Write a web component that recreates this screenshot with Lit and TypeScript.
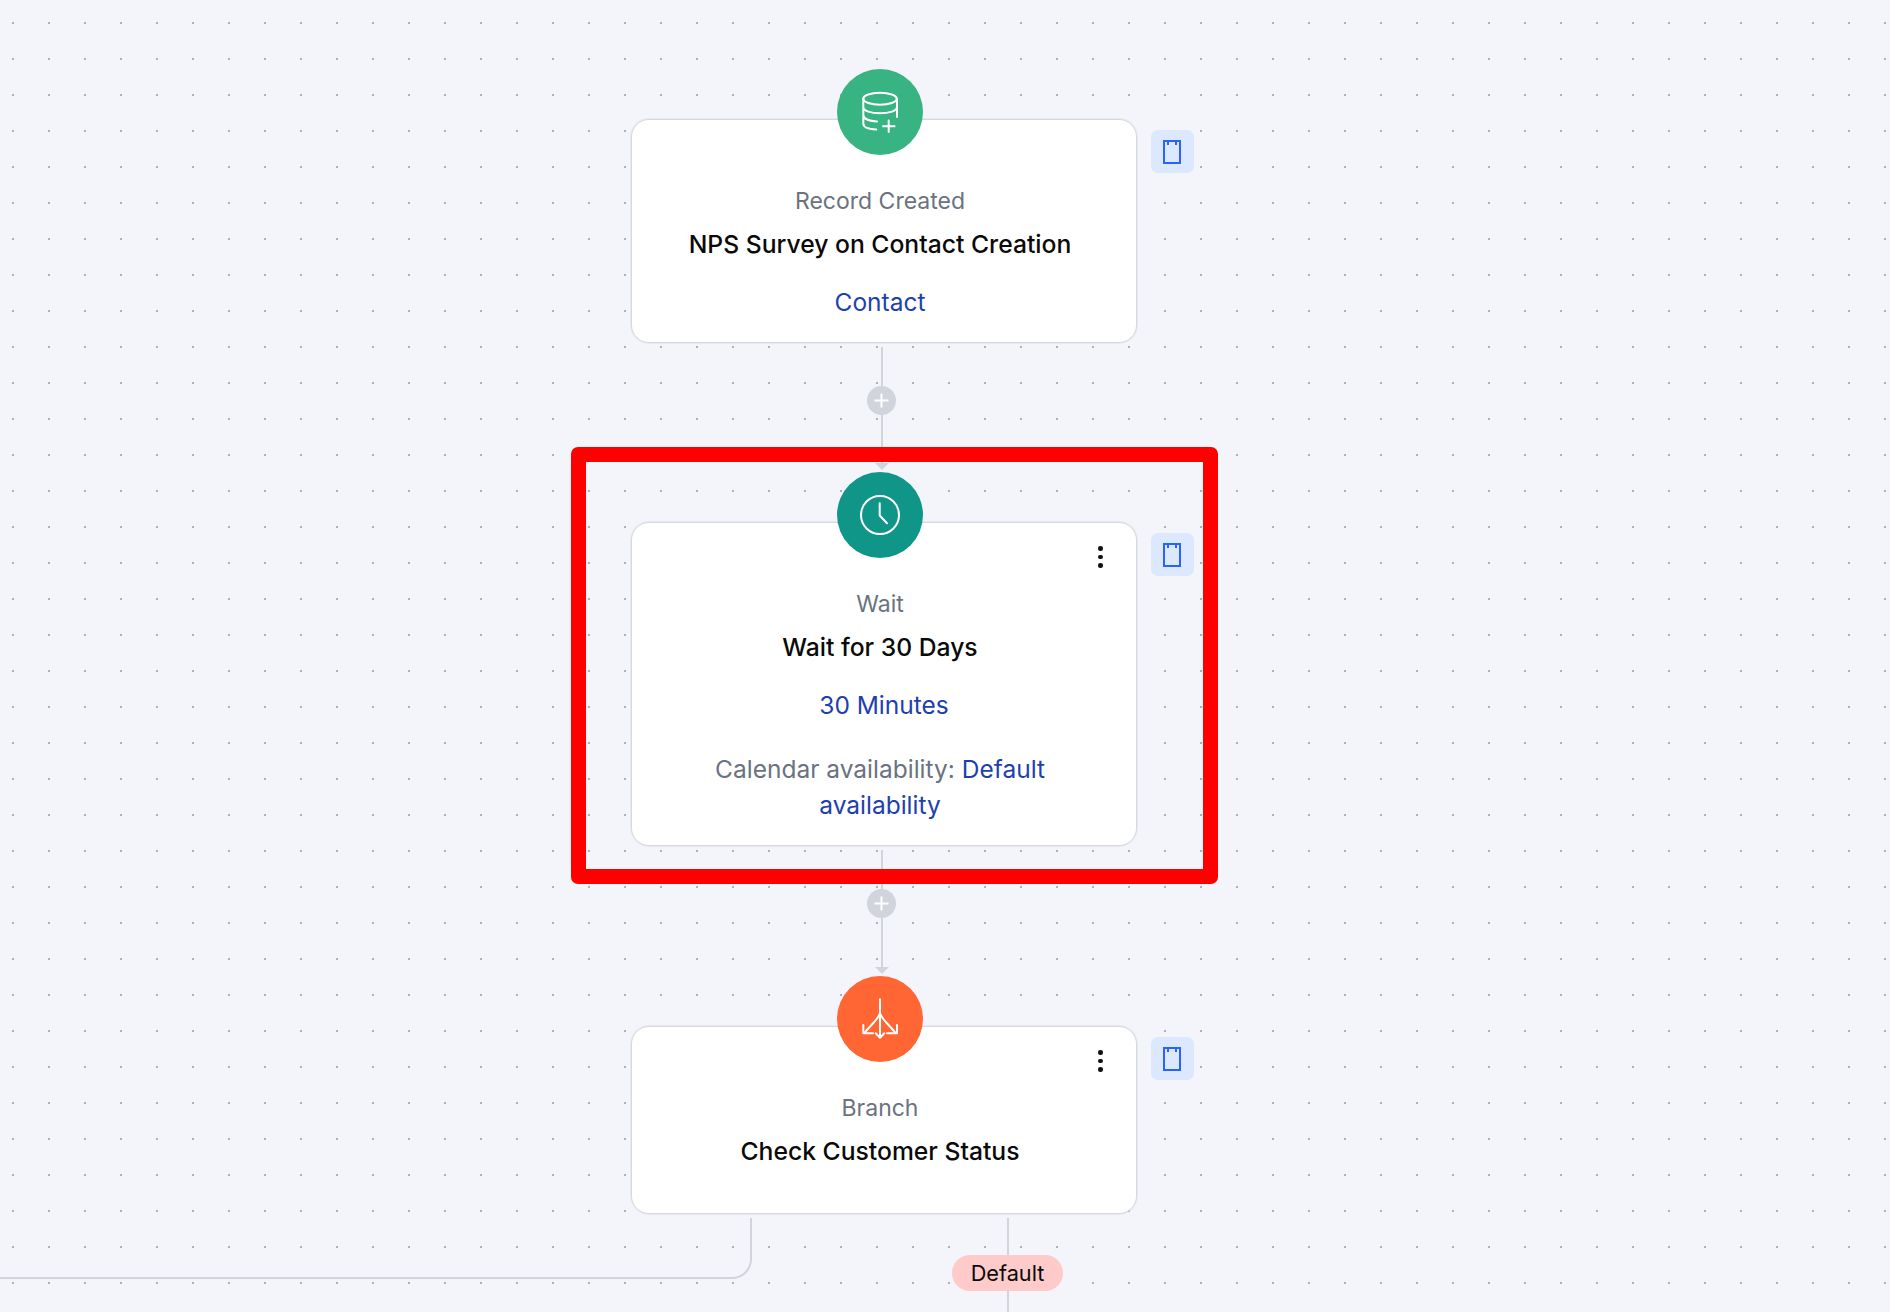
import {LitElement, html, svg, css} from 'lit';
import {customElement} from 'lit/decorators.js';

const databaseIcon = svg`
  <ellipse cx="43" cy="29.7" rx="16.7" ry="6"/>
  <path d="M60 29.7V48M26.3 29.7V54.5c0 3.500 5 5.700 13 6M26.3 38c0 3.800 7.500 6.300 16.700 6.300s17-2.500 17-6.300M26.300 46c0 3.500 5.500 6 13.700 6.400"/>
  <path d="M51.700 51.500v11.500M46 57.300h11.500"/>
`;

const clockIcon = svg`
  <circle cx="43" cy="43" r="19"/>
  <path d="M42.700 31.300V43.500L50 51.300"/>
`;

const branchIcon = svg`
  <path d="M43 23.300V61"/>
  <path d="M38.700 57.300L43 61.700L47.300 57.300"/>
  <path d="M43 37.300C42 42 35 48 27.500 56.800M43 37.300C44 42 51 48 58.500 56.800"/>
  <path d="M26.300 49V57.300H36M60 49V57.300H50"/>
`;

const NODES = [
  {
    color: 'green', icon: databaseIcon, menu: false,
    label: 'Record Created', title: 'NPS Survey on Contact Creation', link: 'Contact',
  },
  {
    color: 'teal', icon: clockIcon, menu: true,
    label: 'Wait', title: 'Wait for 30 Days', link: '30 Minutes', shifted: true, calendar: true,
  },
  {
    color: 'orange', icon: branchIcon, menu: true,
    label: 'Branch', title: 'Check Customer Status',
  },
];

@customElement('app-root')
export class AppRoot extends LitElement {
  static styles = css`
    :host {
      display: block;
      font-family: Inter, "Liberation Sans", sans-serif;
    }
    .stage {
      position: relative;
      width: 1890px;
      height: 1312px;
      overflow: hidden;
      background: #f3f5fa;
    }
    .dots {
      position: absolute;
      inset: 0;
      width: 100%;
      height: 100%;
    }
    .flow {
      position: relative;
      display: flex;
      flex-direction: column;
      padding: 119px 0 0 631px;
    }
    .node {
      display: flex;
      align-items: flex-start;
      gap: 14px;
    }
    .card {
      position: relative;
      box-sizing: border-box;
      width: 506px;
      min-height: 188px;
      padding: 63px 8px 22px 0;
      display: flex;
      flex-direction: column;
      align-items: center;
      background: #fff;
      border: 1px solid #d5d8df;
      box-shadow: 0 0 0 1px rgba(213, 216, 223, 0.35);
      border-radius: 18px;
      font-size: 24.500px;
      line-height: 36px;
      text-align: center;
    }
    .badge {
      position: absolute;
      left: 205px;
      top: -51px;
      width: 86px;
      height: 86px;
      border-radius: 50%;
    }
    .badge svg {
      display: block;
      fill: none;
      stroke: #fff;
      stroke-width: 2;
      stroke-linecap: round;
      stroke-linejoin: round;
    }
    .green { background: #38b382; }
    .teal { background: #0f9688; }
    .orange { background: #ff6633; }
    .menu {
      position: absolute;
      right: 33.500px;
      top: 23px;
      display: flex;
      flex-direction: column;
      gap: 4px;
    }
    .menu span {
      width: 4.500px;
      height: 4.500px;
      border-radius: 50%;
      background: #111;
    }
    .label {
      color: #6b7280;
      font-size: 23px;
    }
    .title {
      margin-top: 7px;
      color: #0a0a0a;
      font-size: 24.700px;
      font-weight: 500;
    }
    .link {
      margin-top: 22px;
      color: #1e40af;
    }
    .shifted {
      margin-left: 8px;
    }
    .calendar {
      margin-top: 28px;
      max-width: 420px;
      color: #6b7280;
    }
    .calendar span {
      color: #1e40af;
    }
    .note {
      box-sizing: border-box;
      width: 43px;
      height: 43px;
      margin-top: 11px;
      padding-right: 1px;
      display: flex;
      align-items: center;
      justify-content: center;
      background: #dbe8fe;
      border-radius: 7px;
    }
    .connector {
      width: 501px;
      height: 180px;
      box-sizing: border-box;
      padding: 4px 0 52px;
      display: flex;
      flex-direction: column;
      align-items: center;
    }
    .node:first-child + .connector {
      height: 179px;
    }
    .line {
      flex: 1;
      width: 2px;
      background: #d1d5db;
    }
    .line.first {
      flex: none;
      height: 39px;
    }
    .plus {
      width: 29px;
      height: 29px;
      flex: none;
      border-radius: 50%;
      background: #d1d5db;
    }
    .arrow {
      width: 0;
      height: 0;
      border-left: 7px solid transparent;
      border-right: 7px solid transparent;
      border-top: 7px solid #d1d5db;
    }
    .highlight {
      position: absolute;
      left: 571px;
      top: 447px;
      box-sizing: border-box;
      width: 647px;
      height: 437px;
      border: 15px solid #ff0000;
      border-radius: 7px;
    }
    .edge-left {
      position: absolute;
      left: 0;
      top: 1218px;
      box-sizing: border-box;
      width: 752px;
      height: 61px;
      border-right: 2px solid #d1d5db;
      border-bottom: 2px solid #d1d5db;
      border-bottom-right-radius: 20px;
    }
    .edge-default {
      position: absolute;
      left: 1007px;
      top: 1218px;
      width: 2px;
      height: 94px;
      background: #d1d5db;
    }
    .pill {
      position: absolute;
      left: 952px;
      top: 1255px;
      width: 111px;
      height: 36px;
      display: flex;
      align-items: center;
      justify-content: center;
      background: #fecaca;
      border-radius: 18px;
      color: #0a0a0a;
      font-size: 21.700px;
    }
  `;

  renderNode(node: any) {
    return html`
      <div class="node">
        <div class="card">
          <div class="badge ${node.color}">
            <svg width="86" height="86" viewBox="0 0 86 86">${node.icon}</svg>
          </div>
          ${node.menu ? html`<div class="menu"><span></span><span></span><span></span></div>` : ''}
          <div class="label">${node.label}</div>
          <div class="title">${node.title}</div>
          ${node.link ? html`<div class="link ${node.shifted ? 'shifted' : ''}">${node.link}</div>` : ''}
          ${node.calendar ? html`<div class="calendar">Calendar availability: <span>Default</span> <span>availability</span></div>` : ''}
        </div>
        <div class="note">
          <svg width="18" height="24" viewBox="0 0 18 24" fill="none" stroke="#2962ff" stroke-width="2">
            <rect x="1" y="1" width="16" height="22"/>
            <path d="M5 1v4M13 1v4"/>
          </svg>
        </div>
      </div>
    `;
  }

  renderConnector() {
    return html`
      <div class="connector">
        <div class="line first"></div>
        <div class="plus">
          <svg width="29" height="29" viewBox="0 0 29 29" fill="none" stroke="#fff" stroke-width="2">
            <path d="M14.500 7.500v14M7.500 14.500h14"/>
          </svg>
        </div>
        <div class="line"></div>
        <div class="arrow"></div>
      </div>
    `;
  }

  render() {
    return html`
      <div class="stage">
        <svg class="dots">
          <defs>
            <pattern id="grid" x="12" y="22" width="36" height="36" patternUnits="userSpaceOnUse">
              <rect width="2" height="2" fill="#adb0b6"/>
            </pattern>
          </defs>
          <rect width="100%" height="100%" fill="url(#grid)"/>
        </svg>
        <div class="edge-left"></div>
        <div class="edge-default"></div>
        <div class="flow">
          ${NODES.map((node, i) => html`
            ${this.renderNode(node)}
            ${i < NODES.length - 1 ? this.renderConnector() : ''}
          `)}
        </div>
        <div class="pill">Default</div>
        <div class="highlight"></div>
      </div>
    `;
  }
}
